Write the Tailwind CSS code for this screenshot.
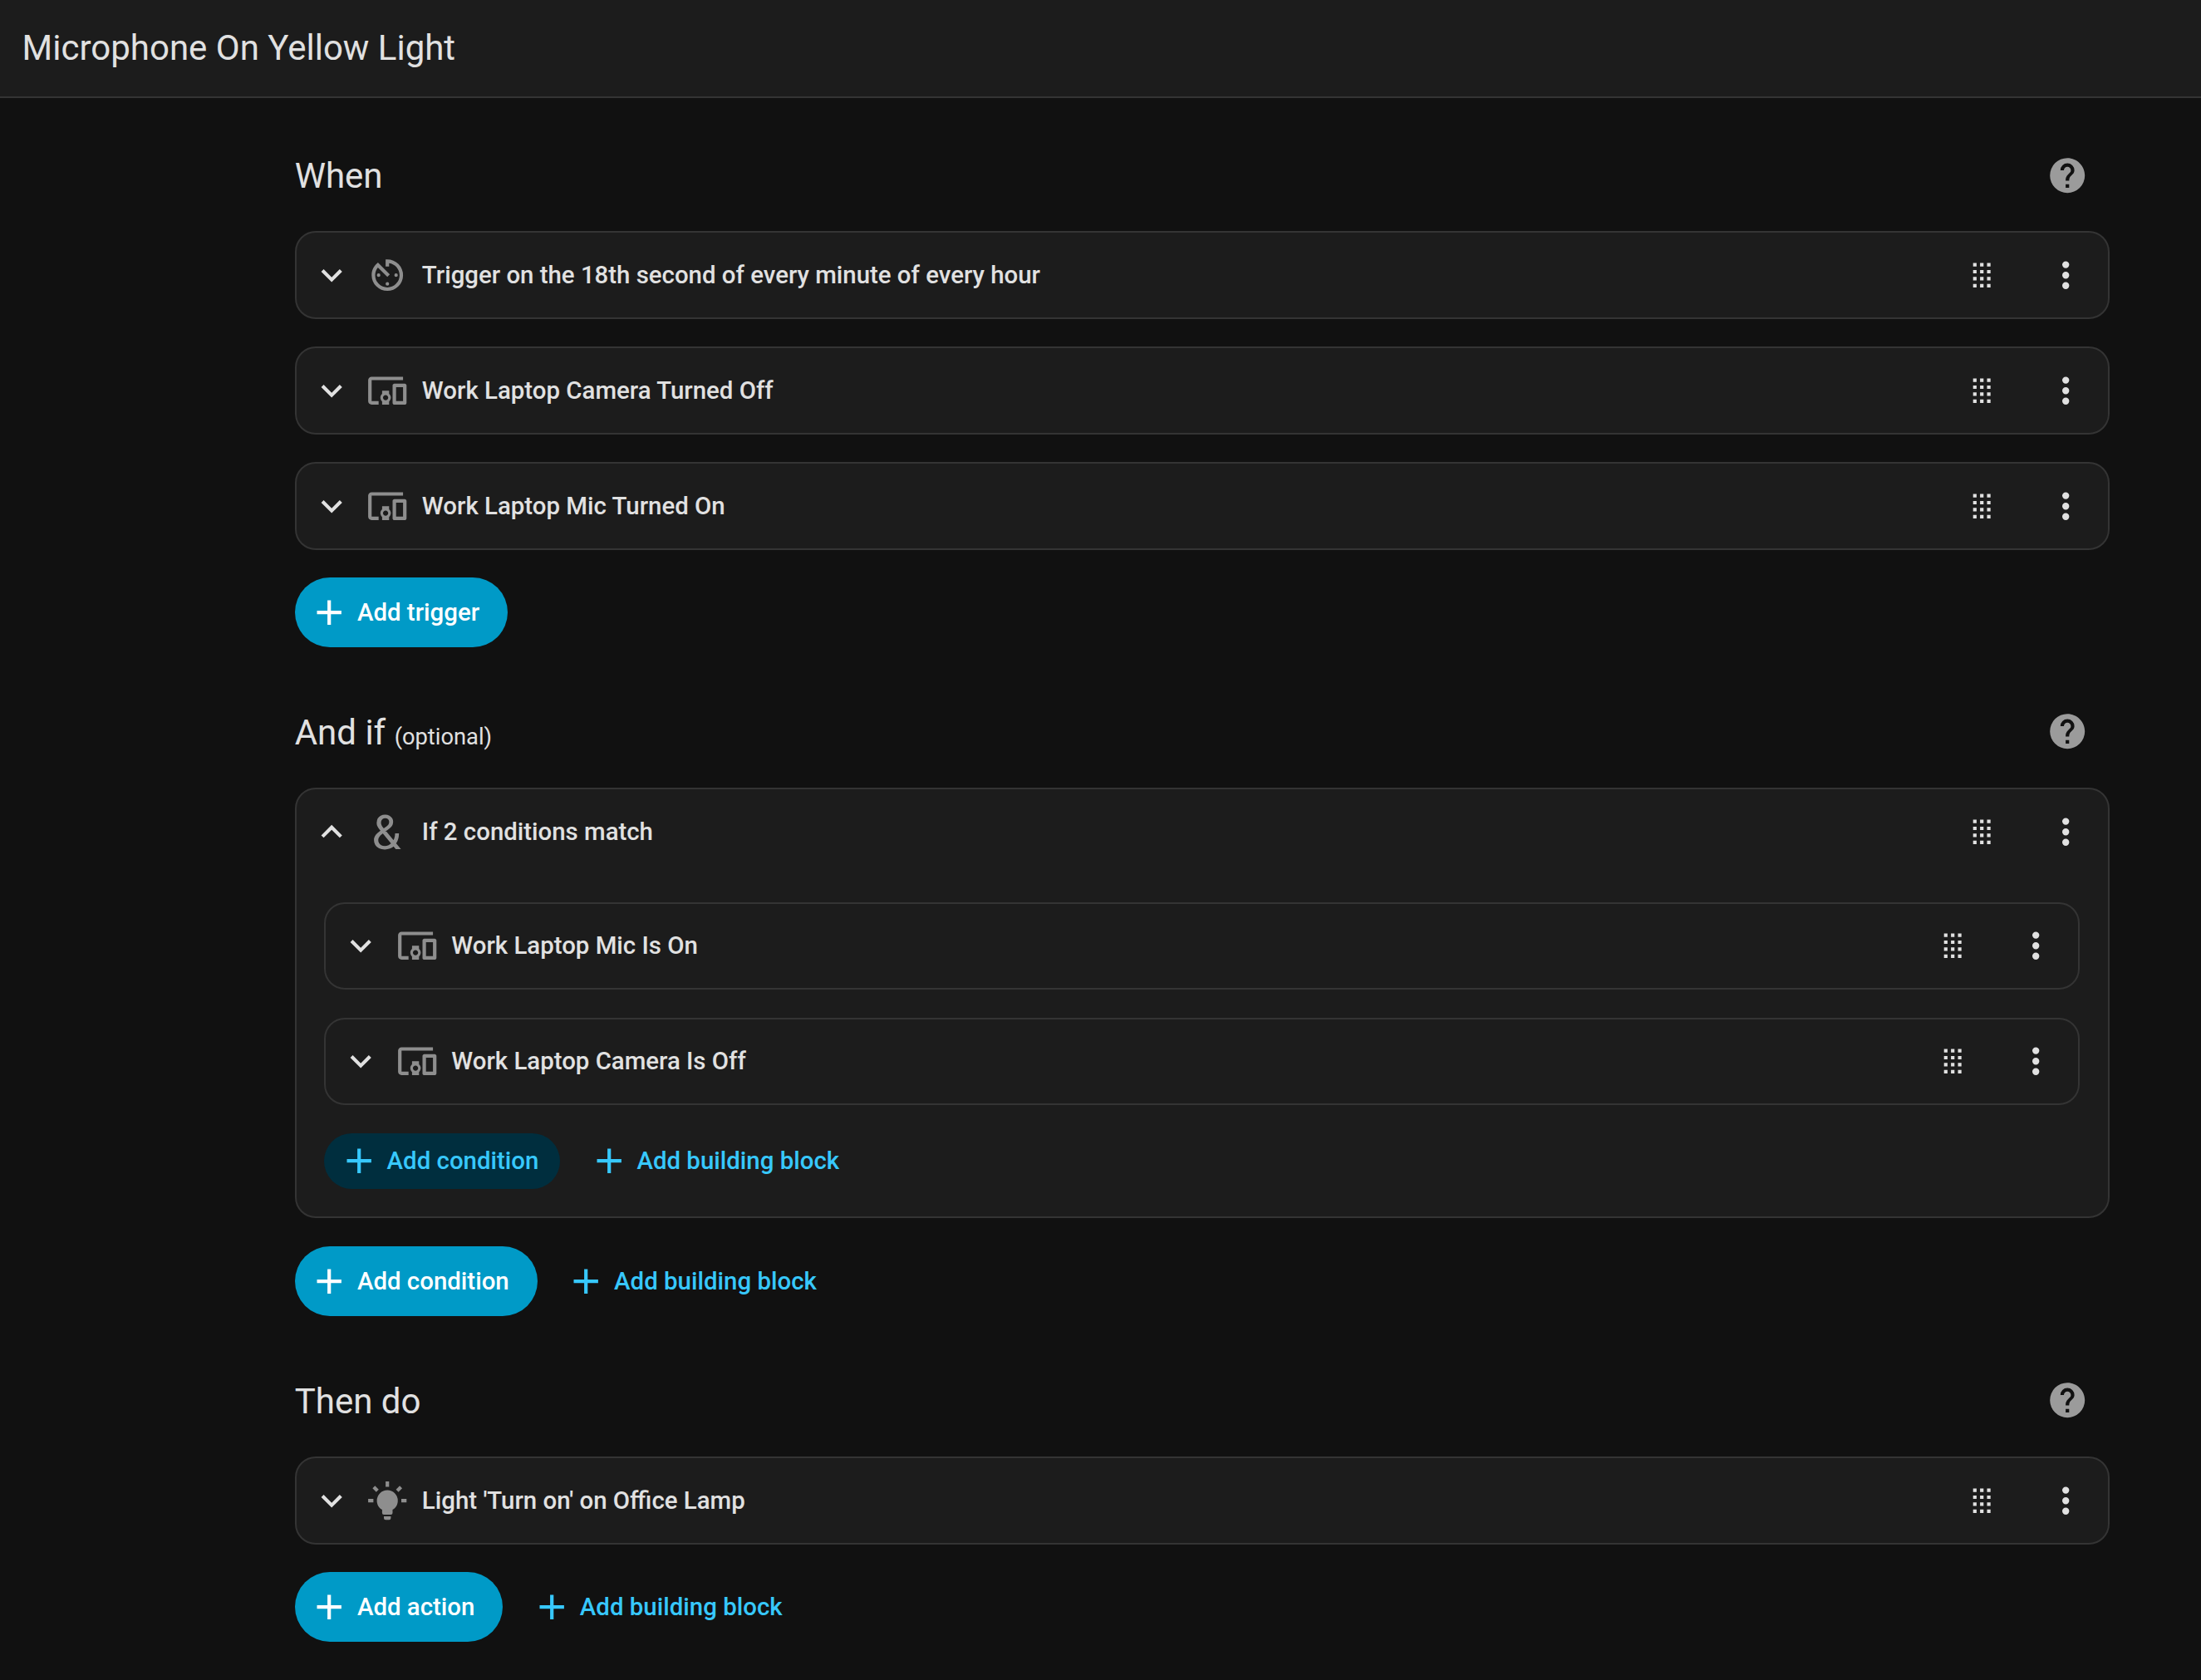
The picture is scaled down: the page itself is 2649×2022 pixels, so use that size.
<!DOCTYPE html>
<html lang="en">
<head>
  <meta charset="UTF-8">
  <meta name="viewport" content="width=device-width, initial-scale=1">
  <title>Microphone On Yellow Light</title>
  <script src="https://cdn.jsdelivr.net/npm/@tailwindcss/browser@4"></script>
</head>
<body class="min-h-screen bg-[#111111] font-['Roboto',sans-serif] text-[#e1e1e1]">

<!-- icons -->
<svg class="hidden">
  <symbol id="chevron-down" viewBox="0 0 24 24"><path d="M7.41,8.58L12,13.17L16.59,8.58L18,10L12,16L6,10L7.41,8.58Z"/></symbol>
  <symbol id="chevron-up" viewBox="0 0 24 24"><path d="M7.41,15.41L12,10.83L16.59,15.41L18,14L12,8L6,14L7.41,15.41Z"/></symbol>
  <symbol id="plus" viewBox="0 0 24 24"><path d="M19,13H13V19H11V13H5V11H11V5H13V11H19V13Z"/></symbol>
  <symbol id="drag" viewBox="0 0 24 24"><path d="M7,19V17H9V19H7M11,19V17H13V19H11M15,19V17H17V19H15M7,15V13H9V15H7M11,15V13H13V15H11M15,15V13H17V15H15M7,11V9H9V11H7M11,11V9H13V11H11M15,11V9H17V11H15M7,7V5H9V7H7M11,7V5H13V7H11M15,7V5H17V7H15Z"/></symbol>
  <symbol id="dots" viewBox="0 0 24 24"><path d="M12,16A2,2 0 0,1 14,18A2,2 0 0,1 12,20A2,2 0 0,1 10,18A2,2 0 0,1 12,16M12,10A2,2 0 0,1 14,12A2,2 0 0,1 12,14A2,2 0 0,1 10,12A2,2 0 0,1 12,10M12,4A2,2 0 0,1 14,6A2,2 0 0,1 12,8A2,2 0 0,1 10,6A2,2 0 0,1 12,4Z"/></symbol>
  <symbol id="help" viewBox="0 0 24 24"><path d="M15.07,11.25L14.17,12.17C13.45,12.89 13,13.5 13,15H11V14.5C11,13.39 11.45,12.39 12.17,11.67L13.41,10.41C13.78,10.05 14,9.55 14,9C14,7.89 13.1,7 12,7A2,2 0 0,0 10,9H8A4,4 0 0,1 12,5A4,4 0 0,1 16,9C16,9.88 15.64,10.67 15.07,11.25M13,19H11V17H13M12,2A10,10 0 0,0 2,12A10,10 0 0,0 12,22A10,10 0 0,0 22,12C22,6.47 17.5,2 12,2Z"/></symbol>
  <symbol id="timer" viewBox="0 0 24 24"><path d="M11,17A1,1 0 0,0 12,18A1,1 0 0,0 13,17A1,1 0 0,0 12,16A1,1 0 0,0 11,17M11,3V7H13V5.08C16.39,5.57 19,8.47 19,12A7,7 0 0,1 12,19A7,7 0 0,1 5,12C5,10.32 5.59,8.78 6.58,7.58L12,13L13.41,11.59L6.61,4.79V4.81C4.42,6.45 3,9.05 3,12A9,9 0 0,0 12,21A9,9 0 0,0 21,12A9,9 0 0,0 12,3M18,12A1,1 0 0,0 17,11A1,1 0 0,0 16,12A1,1 0 0,0 17,13A1,1 0 0,0 18,12M6,12A1,1 0 0,0 7,13A1,1 0 0,0 8,12A1,1 0 0,0 7,11A1,1 0 0,0 6,12Z"/></symbol>
  <symbol id="devices" viewBox="0 0 24 24"><path d="M3 6H21V4H3C1.9 4 1 4.9 1 6V18C1 19.1 1.9 20 3 20H7V18H3V6M13 12H9V13.78C8.39 14.33 8 15.11 8 16C8 16.89 8.39 17.67 9 18.22V20H13V18.22C13.61 17.67 14 16.88 14 16S13.61 14.33 13 13.78V12M11 17.5C10.17 17.5 9.5 16.83 9.5 16S10.17 14.5 11 14.5 12.5 15.17 12.5 16 11.83 17.5 11 17.5M22 8H16C15.5 8 15 8.5 15 9V19C15 19.5 15.5 20 16 20H22C22.5 20 23 19.5 23 19V9C23 8.5 22.5 8 22 8M21 18H17V10H21V18Z"/></symbol>
  <symbol id="bulb" viewBox="0 0 24 24"><path d="M12,6A6,6 0 0,1 18,12C18,14.22 16.79,16.16 15,17.2V19A1,1 0 0,1 14,20H10A1,1 0 0,1 9,19V17.2C7.21,16.16 6,14.22 6,12A6,6 0 0,1 12,6M14,21V22A1,1 0 0,1 13,23H11A1,1 0 0,1 10,22V21H14M20,11H23V13H20V11M1,11H4V13H1V11M13,1V4H11V1H13M4.92,3.5L7.05,5.64L5.63,7.05L3.5,4.93L4.92,3.5M16.95,5.63L19.07,3.5L20.5,4.93L18.37,7.05L16.95,5.63Z"/></symbol>
</svg>

<header class="flex h-[118px] items-center border-b-2 border-[#343434] bg-[#1c1c1c] pl-[26.6px]">
  <h1 class="text-[42px] leading-none">Microphone On Yellow Light</h1>
</header>

<main class="ml-[354.7px] w-[2184px] pt-[42.3px]">

  <!-- When -->
  <section>
    <div class="mb-[17.4px] flex h-[100.8px] items-center justify-between">
      <h2 class="pt-0.5 text-[42px] leading-[43px]">When</h2>
      <button class="flex w-[100.8px] justify-center text-[#9b9b9b]"><svg class="size-[50.4px] fill-current"><use href="#help"/></svg></button>
    </div>
    <div class="flex flex-col gap-[33.6px]">
      <div class="flex h-[105.3px] items-center rounded-[25px] border-2 border-[#343434] bg-[#1c1c1c] pl-[17px]">
        <svg class="size-[50.4px] fill-current"><use href="#chevron-down"/></svg>
        <svg class="ml-[16.8px] size-[50.4px] fill-[#8e8e8e]"><use href="#timer"/></svg>
        <h3 class="ml-[16.6px] grow text-[29.4px] leading-[30px] font-medium">Trigger on the 18th second of every minute of every hour</h3>
        <button class="flex w-[100.8px] justify-center"><svg class="size-[50.4px] fill-current"><use href="#drag"/></svg></button>
        <button class="flex w-[100.8px] justify-center"><svg class="size-[50.4px] fill-current"><use href="#dots"/></svg></button>
      </div>
      <div class="flex h-[105.3px] items-center rounded-[25px] border-2 border-[#343434] bg-[#1c1c1c] pl-[17px]">
        <svg class="size-[50.4px] fill-current"><use href="#chevron-down"/></svg>
        <svg class="ml-[16.8px] size-[50.4px] fill-[#8e8e8e]"><use href="#devices"/></svg>
        <h3 class="ml-[16.6px] grow text-[29.43px] leading-[30px] font-medium">Work Laptop Camera Turned Off</h3>
        <button class="flex w-[100.8px] justify-center"><svg class="size-[50.4px] fill-current"><use href="#drag"/></svg></button>
        <button class="flex w-[100.8px] justify-center"><svg class="size-[50.4px] fill-current"><use href="#dots"/></svg></button>
      </div>
      <div class="flex h-[105.3px] items-center rounded-[25px] border-2 border-[#343434] bg-[#1c1c1c] pl-[17px]">
        <svg class="size-[50.4px] fill-current"><use href="#chevron-down"/></svg>
        <svg class="ml-[16.8px] size-[50.4px] fill-[#8e8e8e]"><use href="#devices"/></svg>
        <h3 class="ml-[16.6px] grow text-[29.43px] leading-[30px] font-medium">Work Laptop Mic Turned On</h3>
        <button class="flex w-[100.8px] justify-center"><svg class="size-[50.4px] fill-current"><use href="#drag"/></svg></button>
        <button class="flex w-[100.8px] justify-center"><svg class="size-[50.4px] fill-current"><use href="#dots"/></svg></button>
      </div>
      <div class="flex gap-[16.8px] text-[29.43px] leading-[30px] font-medium">
        <button class="flex h-[84px] items-center gap-2 rounded-full bg-[#009ac7] pr-[34px] pl-[16.8px] text-white">
          <svg class="size-[50.4px] fill-current"><use href="#plus"/></svg>Add trigger
        </button>
      </div>
    </div>
  </section>

  <!-- And if -->
  <section class="mt-[51px]">
    <div class="mb-[17.4px] flex h-[100.8px] items-center justify-between">
      <h2 class="pt-0.5 text-[42px] leading-[43px]">And if <span class="text-[27.3px] leading-none">(optional)</span></h2>
      <button class="flex w-[100.8px] justify-center text-[#9b9b9b]"><svg class="size-[50.4px] fill-current"><use href="#help"/></svg></button>
    </div>
    <div class="flex flex-col gap-[33.6px]">
      <div class="rounded-[25px] border-2 border-[#343434] bg-[#1c1c1c]">
        <div class="flex h-[101.3px] items-center pl-[17px]">
          <svg class="size-[50.4px] fill-current"><use href="#chevron-up"/></svg>
          <span class="ml-[16.8px] flex size-[50.4px] items-center justify-center pt-0.5 pr-0.5 text-[57px] leading-none text-[#8e8e8e]">&amp;</span>
          <h3 class="ml-[16.6px] grow text-[29.4px] leading-[30px] font-medium">If 2 conditions match</h3>
          <button class="flex w-[100.8px] justify-center"><svg class="size-[50.4px] fill-current"><use href="#drag"/></svg></button>
          <button class="flex w-[100.8px] justify-center"><svg class="size-[50.4px] fill-current"><use href="#dots"/></svg></button>
        </div>
        <div class="flex flex-col gap-[33.6px] px-[33.7px] pt-[34.2px] pb-[33.6px]">
          <div class="flex h-[105.3px] items-center rounded-[25px] border-2 border-[#343434] pl-[17px]">
            <svg class="size-[50.4px] fill-current"><use href="#chevron-down"/></svg>
            <svg class="ml-[16.8px] size-[50.4px] fill-[#8e8e8e]"><use href="#devices"/></svg>
            <h3 class="ml-[16.4px] grow text-[29.4px] leading-[30px] font-medium">Work Laptop Mic Is On</h3>
            <button class="flex w-[100.8px] justify-center"><svg class="size-[50.4px] fill-current"><use href="#drag"/></svg></button>
            <button class="flex w-[100.8px] justify-center"><svg class="size-[50.4px] fill-current"><use href="#dots"/></svg></button>
          </div>
          <div class="flex h-[105.3px] items-center rounded-[25px] border-2 border-[#343434] pl-[17px]">
            <svg class="size-[50.4px] fill-current"><use href="#chevron-down"/></svg>
            <svg class="ml-[16.8px] size-[50.4px] fill-[#8e8e8e]"><use href="#devices"/></svg>
            <h3 class="ml-[16.4px] grow text-[29.4px] leading-[30px] font-medium">Work Laptop Camera Is Off</h3>
            <button class="flex w-[100.8px] justify-center"><svg class="size-[50.4px] fill-current"><use href="#drag"/></svg></button>
            <button class="flex w-[100.8px] justify-center"><svg class="size-[50.4px] fill-current"><use href="#dots"/></svg></button>
          </div>
          <div class="flex gap-[16.8px] text-[29.43px] leading-[30px] font-medium text-[#37c8fd]">
            <button class="flex h-[67.2px] items-center gap-2 rounded-full bg-[#002e3e] pr-[25.6px] pl-[16.8px]">
              <svg class="size-[50.4px] fill-current"><use href="#plus"/></svg>Add condition
            </button>
            <button class="flex h-[67.2px] items-center gap-[8.4px] rounded-full pr-[25.2px] pl-[16.8px]">
              <svg class="size-[50.4px] fill-current"><use href="#plus"/></svg>Add building block
            </button>
          </div>
        </div>
      </div>
      <div class="flex gap-[16.8px] text-[29.43px] leading-[30px] font-medium">
        <button class="flex h-[84px] items-center gap-2 rounded-full bg-[#009ac7] pr-[34px] pl-[16.8px] text-white">
          <svg class="size-[50.4px] fill-current"><use href="#plus"/></svg>Add condition
        </button>
        <button class="flex h-[84px] items-center gap-[8.4px] rounded-full pr-[33.6px] pl-[16.8px] text-[#37c8fd]">
          <svg class="size-[50.4px] fill-current"><use href="#plus"/></svg>Add building block
        </button>
      </div>
    </div>
  </section>

  <!-- Then do -->
  <section class="mt-[51.2px]">
    <div class="mb-[17.4px] flex h-[100.8px] items-center justify-between">
      <h2 class="pt-0.5 text-[42px] leading-[43px]">Then do</h2>
      <button class="flex w-[100.8px] justify-center text-[#9b9b9b]"><svg class="size-[50.4px] fill-current"><use href="#help"/></svg></button>
    </div>
    <div class="flex flex-col gap-[33.6px]">
      <div class="flex h-[105.3px] items-center rounded-[25px] border-2 border-[#343434] bg-[#1c1c1c] pl-[17px]">
        <svg class="size-[50.4px] fill-current"><use href="#chevron-down"/></svg>
        <svg class="ml-[16.8px] size-[50.4px] fill-[#8e8e8e]"><use href="#bulb"/></svg>
        <h3 class="ml-[16.6px] grow text-[29.43px] leading-[30px] font-medium">Light 'Turn on' on Office Lamp</h3>
        <button class="flex w-[100.8px] justify-center"><svg class="size-[50.4px] fill-current"><use href="#drag"/></svg></button>
        <button class="flex w-[100.8px] justify-center"><svg class="size-[50.4px] fill-current"><use href="#dots"/></svg></button>
      </div>
      <div class="flex gap-[16.8px] text-[29.43px] leading-[30px] font-medium">
        <button class="flex h-[84px] items-center gap-2 rounded-full bg-[#009ac7] pr-[34px] pl-[16.8px] text-white">
          <svg class="size-[50.4px] fill-current"><use href="#plus"/></svg>Add action
        </button>
        <button class="flex h-[84px] items-center gap-[8.4px] rounded-full pr-[33.6px] pl-[16.8px] text-[#37c8fd]">
          <svg class="size-[50.4px] fill-current"><use href="#plus"/></svg>Add building block
        </button>
      </div>
    </div>
  </section>

</main>
</body>
</html>
